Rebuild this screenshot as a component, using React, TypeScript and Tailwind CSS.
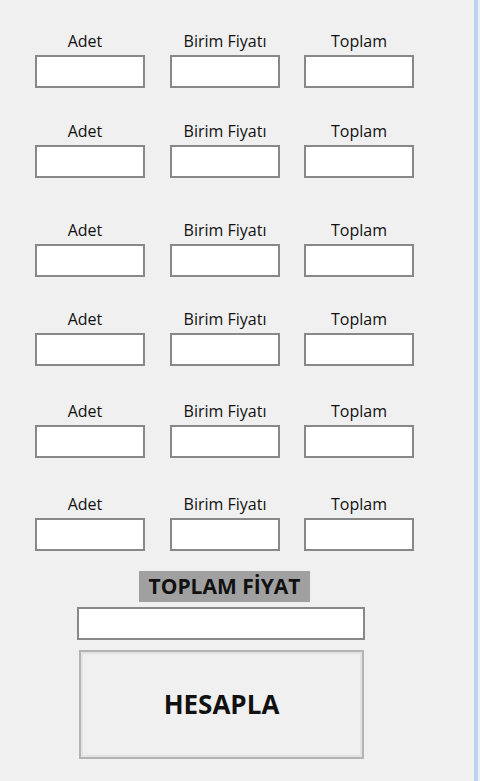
import React from "react";

const rows = [
  "mt-[31px]",
  "mt-[33px]",
  "mt-[42px]",
  "mt-[32px]",
  "mt-[35px]",
  "mt-[36px]",
];

function Field() {
  return <div className="h-[33px] w-[110px] border-2 border-[#888888] bg-white" />;
}

function Row({ mt }: { mt: string }) {
  return (
    <div className={`flex ${mt}`}>
      <div className="ml-[35px] flex w-[110px] flex-col">
        <div className="mb-[4px] pr-[10px] text-center text-[16px] leading-[20px] text-[#111]">Adet</div>
        <Field />
      </div>
      <div className="ml-[25px] flex w-[110px] flex-col">
        <div className="mb-[4px] text-center text-[16px] leading-[20px] text-[#111]">Birim Fiyatı</div>
        <Field />
      </div>
      <div className="ml-[24px] flex w-[110px] flex-col">
        <div className="mb-[4px] text-center text-[16px] leading-[20px] text-[#111]">Toplam</div>
        <Field />
      </div>
    </div>
  );
}

export default function App() {
  return (
    <div className="flex h-[781px] w-[480px] overflow-hidden bg-[#f0f0f0] font-['Open_Sans',sans-serif]">
      <div className="flex w-[474px] flex-col">
        {rows.map((mt, i) => (
          <Row key={i} mt={mt} />
        ))}
        <div className="mt-[20px] flex h-[31px] w-[171px] items-center justify-center self-start ml-[139px] bg-[#a0a0a0] text-[21px] font-bold text-[#111]">
          TOPLAM FİYAT
        </div>
        <div className="ml-[77px] mt-[5px] h-[33px] w-[288px] border-2 border-[#888888] bg-white" />
        <button className="ml-[79px] mt-[10px] flex h-[109px] w-[285px] items-center justify-center border-2 border-[#b4b4b4] bg-[#f0f0f0] text-[26px] font-bold text-[#111] shadow-[inset_0_0_0_2px_#e3e3e3]">
          HESAPLA
        </button>
      </div>
      <div className="w-[4px] bg-[#bcd2ee]" />
      <div className="w-[2px] bg-[#e8eef6]" />
    </div>
  );
}
